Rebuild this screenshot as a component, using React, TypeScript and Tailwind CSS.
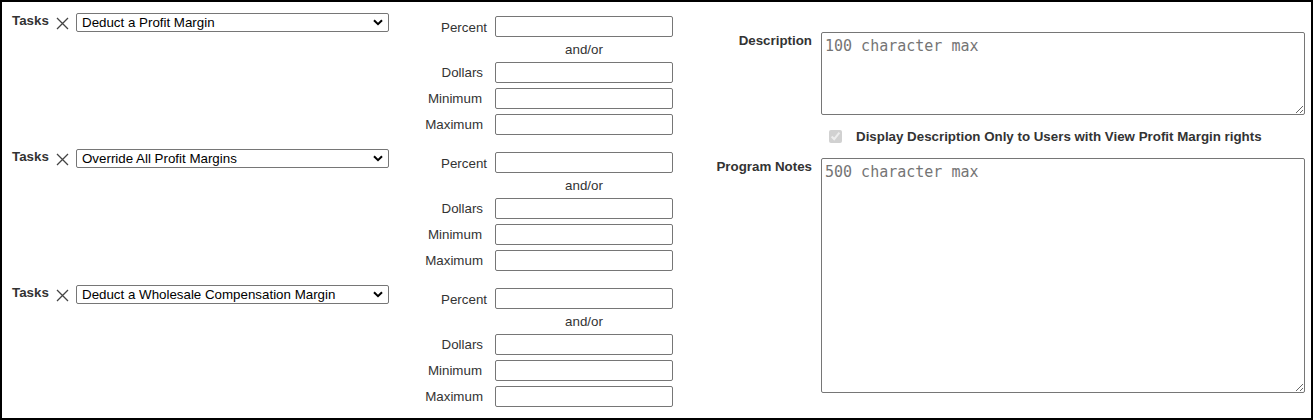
import React from "react";

const TASKS = [
  "Deduct a Profit Margin",
  "Override All Profit Margins",
  "Deduct a Wholesale Compensation Margin",
];

function CloseIcon() {
  return (
    <svg width="13" height="13" viewBox="0 0 13 13" className="ml-[8px] mt-[4px] shrink-0">
      <path d="M1 1L12 12M12 1L1 12" stroke="#444" strokeWidth="1.3" fill="none" />
    </svg>
  );
}

function Chevron() {
  return (
    <svg width="10" height="7" viewBox="0 0 10 7" className="shrink-0">
      <path d="M1 1.2L5 5.2L9 1.2" stroke="#000" strokeWidth="2" fill="none" />
    </svg>
  );
}

function Field({ label, pad }: { label: string; pad: string }) {
  return (
    <div className="flex items-center h-[21px]">
      <span className={`w-[67px] text-right ${pad}`}>{label}</span>
      <input
        type="text"
        className="ml-[8px] w-[178px] h-[21px] border border-[#767676] rounded-[2px] bg-white outline-none"
      />
    </div>
  );
}

function TaskGroup({ task }: { task: string }) {
  return (
    <div className="flex h-[122px] shrink-0">
      <div className="flex items-start w-[387px] pl-[10px]">
        <span className="w-[36px] leading-[15px] font-bold">Tasks</span>
        <CloseIcon />
        <div className="ml-[7px] w-[313px] h-[19px] flex items-center justify-between pl-[5px] pr-[5px] border border-[#767676] rounded-[2px] text-black">
          <span className="leading-[15px]">{task}</span>
          <Chevron />
        </div>
      </div>
      <div className="ml-[31px] pt-[3px] flex flex-col">
        <Field label="Percent" pad="pr-0 pt-[2px]" />
        <div className="h-[25px] flex items-center">
          <span className="ml-[75px] w-[178px] text-center">and/or</span>
        </div>
        <div className="flex flex-col gap-[5px]">
          <Field label="Dollars" pad="pr-[4px] pt-[1px]" />
          <Field label="Minimum" pad="pr-[5px] pt-[1px]" />
          <Field label="Maximum" pad="pr-[4px] pt-[1px]" />
        </div>
      </div>
    </div>
  );
}

export default function App() {
  return (
    <div className="w-[1313px] h-[420px] border-2 border-black bg-white flex overflow-hidden font-['Liberation_Sans',Arial,sans-serif] text-[13.33px] text-[#333]">
      <div className="w-[698px] shrink-0 pt-[11px] flex flex-col gap-[14px]">
        {TASKS.map((t) => (
          <TaskGroup key={t} task={t} />
        ))}
      </div>

      <div className="flex-1 pt-[30px] pr-[6px] flex flex-col">
        <div className="flex items-start">
          <span className="w-[112px] text-right font-bold leading-[15px] pt-[1px]">Description</span>
          <textarea
            placeholder="100 character max"
            className="ml-[9px] flex-1 h-[83px] border border-[#767676] rounded-[2px] pt-[4px] pl-[3px] font-['DejaVu_Sans_Mono',monospace] text-[15px] leading-[18px] text-black placeholder:text-[#757575] outline-none"
          />
        </div>

        <div className="flex items-center ml-[129px] mt-[15px] h-[13px]">
          <input type="checkbox" checked disabled readOnly className="w-[13px] h-[13px] shrink-0" />
          <span className="ml-[14px] font-bold leading-[15px]">
            Display Description Only to Users with View Profit Margin rights
          </span>
        </div>

        <div className="flex items-start mt-[15px]">
          <span className="w-[112px] text-right font-bold leading-[15px] pt-[1px]">Program Notes</span>
          <textarea
            placeholder="500 character max"
            className="ml-[9px] flex-1 h-[235px] border border-[#767676] rounded-[2px] pt-[4px] pl-[3px] font-['DejaVu_Sans_Mono',monospace] text-[15px] leading-[18px] text-black placeholder:text-[#757575] outline-none"
          />
        </div>
      </div>
    </div>
  );
}
